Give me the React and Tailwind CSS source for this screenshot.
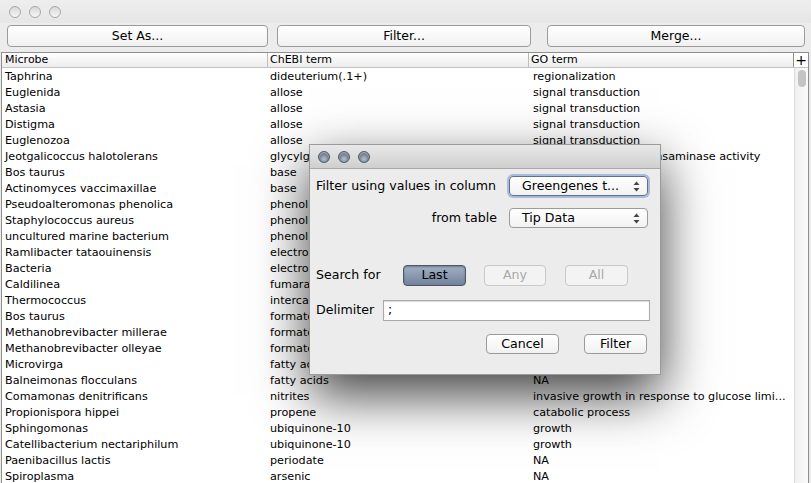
import React from "react";

const rows = [
  ["Taphrina", "dideuterium(.1+)", "regionalization"],
  ["Euglenida", "allose", "signal transduction"],
  ["Astasia", "allose", "signal transduction"],
  ["Distigma", "allose", "signal transduction"],
  ["Euglenozoa", "allose", "signal transduction"],
  ["Jeotgalicoccus halotolerans", "glycylglycine", "alanine-glyoxylate transaminase activity"],
  ["Bos taurus", "base", ""],
  ["Actinomyces vaccimaxillae", "base", ""],
  ["Pseudoalteromonas phenolica", "phenol", ""],
  ["Staphylococcus aureus", "phenol", ""],
  ["uncultured marine bacterium", "phenol", ""],
  ["Ramlibacter tataouinensis", "electron", ""],
  ["Bacteria", "electron", ""],
  ["Caldilinea", "fumarate", ""],
  ["Thermococcus", "intercal", ""],
  ["Bos taurus", "formate", ""],
  ["Methanobrevibacter millerae", "formate", ""],
  ["Methanobrevibacter olleyae", "formate", ""],
  ["Microvirga", "fatty acids", ""],
  ["Balneimonas flocculans", "fatty acids", "NA"],
  ["Comamonas denitrificans", "nitrites", "invasive growth in response to glucose limi..."],
  ["Propionispora hippei", "propene", "catabolic process"],
  ["Sphingomonas", "ubiquinone-10", "growth"],
  ["Catellibacterium nectariphilum", "ubiquinone-10", "growth"],
  ["Paenibacillus lactis", "periodate", "NA"],
  ["Spiroplasma", "arsenic", "NA"],
];

function Light({ active }) {
  return active ? (
    <div className="w-[12px] h-[12px] rounded-full border border-[#4f5b68] bg-[radial-gradient(circle_at_50%_70%,#b7c3d0_0%,#7d8b9b_45%,#57636f_100%)] shadow-[inset_0_1px_1px_rgba(255,255,255,0.5)]" />
  ) : (
    <div className="w-[12px] h-[12px] rounded-full border border-[#a8a8a8] bg-[linear-gradient(#d8d8d8,#f6f6f6)]" />
  );
}

function Arrows() {
  return (
    <svg width="7" height="11" viewBox="0 0 7 11" className="shrink-0">
      <path d="M3.5 0.5 L6.5 4 L0.5 4 Z" fill="#444" />
      <path d="M3.5 10.5 L6.5 7 L0.5 7 Z" fill="#444" />
    </svg>
  );
}

export default function App() {
  return (
    <div
      className="relative w-[811px] h-[483px] overflow-hidden bg-[#ececec] text-[#000]"
      style={{ fontFamily: '"DejaVu Sans", "Liberation Sans", sans-serif' }}
    >
      {/* title bar */}
      <div className="h-[23px] flex items-center gap-[8px] pl-[9px] bg-[linear-gradient(#eeeeee,#e6e6e6)]">
        <Light />
        <Light />
        <Light />
      </div>

      {/* toolbar */}
      <div className="h-[29px] flex items-start pt-[2px] text-[12.5px]">
        <button className="ml-[7px] w-[261px] h-[22px] rounded-[4px] border border-[#9b9b9b] bg-[linear-gradient(#ffffff,#f1f1f1)] flex items-center justify-center">
          Set As...
        </button>
        <button className="ml-[9px] w-[254px] h-[22px] rounded-[4px] border border-[#9b9b9b] bg-[linear-gradient(#ffffff,#f1f1f1)] flex items-center justify-center">
          Filter...
        </button>
        <button className="ml-[16px] w-[258px] h-[22px] rounded-[4px] border border-[#9b9b9b] bg-[linear-gradient(#ffffff,#f1f1f1)] flex items-center justify-center">
          Merge...
        </button>
      </div>

      {/* table */}
      <div className="ml-[1px] w-[808px] border-l border-r border-[#8e8e8e] flex flex-col">
        {/* header */}
        <div className="h-[16px] flex border-t border-b border-t-[#8e8e8e] border-b-[#c4c4c4] bg-[linear-gradient(#ffffff,#ececec)] text-[11px] leading-[14px]">
          <div className="w-[266px] pl-[3px] border-r border-[#bdbdbd]">Microbe</div>
          <div className="w-[261px] pl-[2px] border-r border-[#bdbdbd]">ChEBI term</div>
          <div className="w-[264px] pl-[2px]">GO term</div>
          <div className="w-[15px] border-l border-[#8e8e8e] bg-white flex items-center justify-center text-[14px] leading-[14px]">+</div>
        </div>
        {/* body */}
        <div className="flex">
          <div className="w-[792px] bg-white text-[11.2px]">
            {rows.map((r, i) => (
              <div key={i} className="h-[16px] pt-[2px] flex items-center whitespace-nowrap">
                <div className="w-[266px] pl-[3px] overflow-hidden">{r[0]}</div>
                <div className="w-[262px] pl-[2px] overflow-hidden">{r[1]}</div>
                <div className="w-[264px] pl-[3px] overflow-hidden">{r[2]}</div>
              </div>
            ))}
          </div>
          <div className="w-[15px] border-l border-[#dcdcdc] bg-[linear-gradient(90deg,#f0f0f0,#fbfbfb)] pt-[2px] flex justify-center">
            <div className="w-[8px] h-[17px] rounded-full bg-[#c4c4c4]" />
          </div>
        </div>
      </div>

      {/* dialog */}
      <div className="absolute left-[309px] top-[144px] w-[352px] h-[231px] bg-[#ececec] border border-[#9a9a9a] shadow-[0_20px_50px_rgba(0,0,0,0.75)] flex flex-col text-[12.6px]">
        <div className="h-[24px] shrink-0 flex items-center gap-[8px] pl-[8px] bg-[linear-gradient(#e9e9e9,#cfcfcf)] border-b border-[#a9a9a9]">
          <Light active />
          <Light active />
          <Light active />
        </div>
        <div className="flex flex-col px-[6px]">
          <div className="mt-[7px] h-[20px] flex items-center">
            <div className="w-[193px]">Filter using values in column</div>
            <div className="w-[139px] h-[20px] rounded-[4px] border border-[#5f7089] ring-[2px] ring-[#a6bcda] bg-[linear-gradient(#ffffff,#f2f2f2)] flex items-center pl-[12px] pr-[7px]">
              <span className="flex-1">Greengenes t...</span>
              <Arrows />
            </div>
          </div>
          <div className="mt-[12px] h-[20px] flex items-center">
            <div className="w-[193px] text-right pr-[12px]">from table</div>
            <div className="w-[139px] h-[20px] rounded-[4px] border border-[#9b9b9b] bg-[linear-gradient(#ffffff,#f2f2f2)] flex items-center pl-[12px] pr-[7px]">
              <span className="flex-1">Tip Data</span>
              <Arrows />
            </div>
          </div>
          <div className="mt-[37px] h-[21px] flex items-center">
            <div className="w-[87px]">Search for</div>
            <div className="w-[63px] h-[21px] rounded-[4px] border border-[#4b5868] bg-[linear-gradient(#a2b0c4,#72839c)] shadow-[inset_0_1px_2px_rgba(0,0,0,0.3)] flex items-center justify-center">
              Last
            </div>
            <div className="ml-[18px] w-[62px] h-[21px] rounded-[4px] border border-[#c9c9c9] bg-[#f3f3f3] text-[#a9a9a9] flex items-center justify-center">
              Any
            </div>
            <div className="ml-[19px] w-[63px] h-[21px] rounded-[4px] border border-[#c9c9c9] bg-[#f3f3f3] text-[#a9a9a9] flex items-center justify-center">
              All
            </div>
          </div>
          <div className="mt-[14px] h-[21px] flex items-center">
            <div className="w-[67px]">Delimiter</div>
            <div className="w-[267px] h-[21px] border border-[#a9a9a9] bg-white shadow-[inset_0_1px_1px_rgba(0,0,0,0.15)] flex items-center pl-[4px]">
              ;
            </div>
          </div>
          <div className="mt-[13px] h-[20px] flex items-center">
            <div className="ml-[170px] w-[73px] h-[20px] rounded-[4px] border border-[#9b9b9b] bg-[linear-gradient(#ffffff,#f1f1f1)] flex items-center justify-center">
              Cancel
            </div>
            <div className="ml-[25px] w-[63px] h-[20px] rounded-[4px] border border-[#9b9b9b] bg-[linear-gradient(#ffffff,#f1f1f1)] flex items-center justify-center">
              Filter
            </div>
          </div>
        </div>
      </div>
    </div>
  );
}
